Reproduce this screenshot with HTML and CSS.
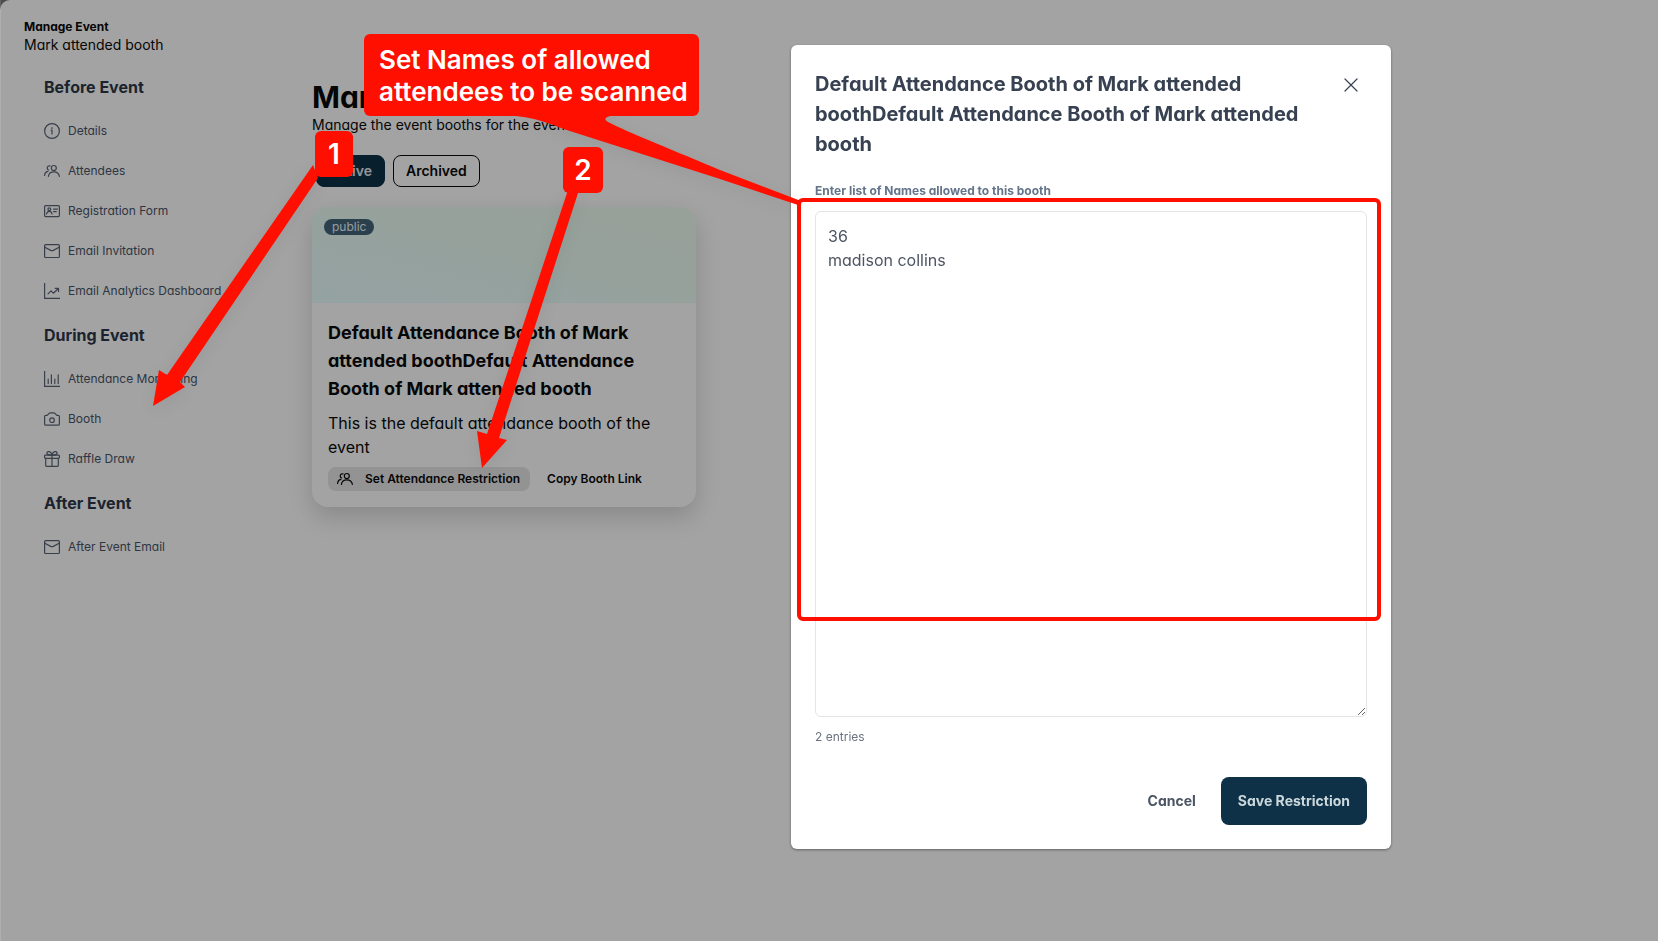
FILE: index.html
```html
<!DOCTYPE html>
<html lang="en">
<head>
<meta charset="utf-8">
<title>Manage Event</title>
<link rel="stylesheet" href="styles.css">
</head>
<body>
<svg class="defs" aria-hidden="true">
  <symbol id="i-info" viewBox="0 0 16 16"><circle cx="8" cy="8" r="7.4"/><path d="M8 7.2v3.8M7.2 7.2H8M8 4.6v.8"/></symbol>
  <symbol id="i-users" viewBox="0 0 16 16"><circle cx="9.8" cy="5" r="2.5"/><path d="M4.4 13.4c.4-3 2.5-4.6 5.400-4.600s5 1.600 5.600 4.600M6 2.900C4.400 2.500 3.200 3.500 3.200 4.900c0 1 .6 1.800 1.500 2.100M.6 12.500c.1-2.200 1.200-3.700 3.300-4.100"/></symbol>
  <symbol id="i-card" viewBox="0 0 16 16"><rect x=".6" y="2.600" width="14.800" height="11" rx="1"/><circle cx="5.300" cy="6.300" r="1.400"/><path d="M2.600 11c.3-1.700 1.300-2.600 2.700-2.600S7.700 9.300 8 11M9.600 6.200h3.800M9.600 8.700h2.600"/></symbol>
  <symbol id="i-mail" viewBox="0 0 16 16"><rect x=".6" y="1.700" width="14.800" height="12.800" rx="1"/><path d="M.8 4.300 6.700 7.400q1.300.6 2.600 0l5.900-3.100"/></symbol>
  <symbol id="i-trend" viewBox="0 0 16 16"><path d="M.6.300v15.100H16M4 10.800l3-3 2.400 2.400 5-4.700M11.300 5.400h3.200v3.200"/></symbol>
  <symbol id="i-bars" viewBox="0 0 16 16"><path d="M.6.300v15.100H16M4.200 12.600V8.200M7.400 12.600V3.800M10.800 12.600V8.200M14.200 12.600V3.800"/></symbol>
  <symbol id="i-camera" viewBox="0 0 16 16"><path d="M1.900 4.400h1.300l1.900-2q.5-.5 1.200-.5h3.400q.7 0 1.200.5l1.900 2h1.300q1.300 0 1.300 1.300v7.200q0 1.300-1.300 1.300H1.900Q.6 14.200.6 12.900V5.700q0-1.300 1.300-1.300z"/><circle cx="8" cy="9.200" r="2.300"/></symbol>
  <symbol id="i-gift" viewBox="0 0 16 16"><rect x=".6" y="4.100" width="14.800" height="3.300" rx=".8"/><path d="M1.700 7.400v7.200q0 .8.8.8h11q.8 0 .8-.8V7.400M8 4.100v11.300M8 4.100C4.500 4.300 2.600 3.400 3 1.700 3.500 0 7.100-.1 8 4.100zM8 4.100c3.500.2 5.400-.7 5-2.400C12.500 0 8.900-.1 8 4.100z"/></symbol>
  <symbol id="i-close" viewBox="0 0 16 16"><path d="m2 2 12 12M14 2 2 14"/></symbol>
</svg>

<div class="app">
  <aside class="sidebar">
    <p class="eyebrow">Manage Event</p>
    <p class="event-name">Mark attended booth</p>
    <nav class="nav">
      <h2 class="nav-title">Before Event</h2>
      <a class="nav-link" href="#"><svg class="icon"><use href="#i-info"/></svg>Details</a>
      <a class="nav-link" href="#"><svg class="icon"><use href="#i-users"/></svg>Attendees</a>
      <a class="nav-link" href="#"><svg class="icon"><use href="#i-card"/></svg>Registration Form</a>
      <a class="nav-link" href="#"><svg class="icon"><use href="#i-mail"/></svg>Email Invitation</a>
      <a class="nav-link" href="#"><svg class="icon"><use href="#i-trend"/></svg>Email Analytics Dashboard</a>
      <h2 class="nav-title">During Event</h2>
      <a class="nav-link" href="#"><svg class="icon"><use href="#i-bars"/></svg>Attendance Monitoring</a>
      <a class="nav-link" href="#"><svg class="icon"><use href="#i-camera"/></svg>Booth</a>
      <a class="nav-link" href="#"><svg class="icon"><use href="#i-gift"/></svg>Raffle Draw</a>
      <h2 class="nav-title">After Event</h2>
      <a class="nav-link" href="#"><svg class="icon"><use href="#i-mail"/></svg>After Event Email</a>
    </nav>
  </aside>

  <main class="main">
    <h1 class="page-title">Manage Booths</h1>
    <p class="page-sub">Manage the event booths for the event</p>
    <div class="tabs">
      <button class="tab tab-active" type="button">Active</button>
      <button class="tab" type="button">Archived</button>
    </div>
    <article class="card">
      <div class="card-cover"><span class="badge">public</span></div>
      <div class="card-body">
        <h3 class="card-title">Default Attendance Booth of Mark attended boothDefault Attendance Booth of Mark attended booth</h3>
        <p class="card-text">This is the default attendance booth of the event</p>
        <div class="card-actions">
          <button class="small-btn small-btn-filled" type="button"><svg class="icon"><use href="#i-users"/></svg>Set Attendance Restriction</button>
          <button class="small-btn" type="button">Copy Booth Link</button>
        </div>
      </div>
    </article>
  </main>
</div>

<div class="overlay">
  <form class="modal" role="dialog" aria-labelledby="modal-title">
    <header class="modal-head">
      <h2 class="modal-title" id="modal-title">Default Attendance Booth of Mark attended boothDefault Attendance Booth of Mark attended booth</h2>
      <button class="close" type="button" aria-label="Close"><svg class="icon"><use href="#i-close"/></svg></button>
    </header>
    <label class="field-label" for="names">Enter list of Names allowed to this booth</label>
    <textarea class="names" id="names" rows="20" spellcheck="false">36
madison collins</textarea>
    <p class="count">2 entries</p>
    <footer class="modal-foot">
      <button class="btn" type="button">Cancel</button>
      <button class="btn btn-primary" type="submit">Save Restriction</button>
    </footer>
  </form>
</div>

<div class="notes">
  <svg class="note-shapes" aria-hidden="true">
    <rect class="frame" x="799" y="200" width="580" height="419" rx="4"/>
    <g class="pointers">
      <polygon points="313,165 167,375 159,370 153,406 185,387 180,382 318,178"/>
      <polygon points="568,190 487,434 477,431 482,468 507,440 499,438 579,190"/>
      <path d="M500 115C540 116 552 126 573 132L720 179 798 205 801 201 720 170C680 153 625 131 608 122Q600 117 616 115z"/>
    </g>
  </svg>
  <p class="note callout">Set Names of allowed attendees to be scanned</p>
  <span class="note step step-one">1</span>
  <span class="note step step-two">2</span>
</div>
</body>
</html>
```
FILE: styles.css
```css
* { box-sizing: border-box; }

html { background: #777; }

body {
  margin: 0;
  font-family: Inter, "Liberation Sans", sans-serif;
  font-feature-settings: "cv11";
  color: #0a0a0a;
}

h1, h2, h3, p { margin: 0; }

button {
  font: inherit;
  font-feature-settings: inherit;
  color: inherit;
  background: none;
  border: 0;
  padding: 0;
}

.defs { display: none; }

.icon {
  width: 16px;
  height: 16px;
  flex: none;
  fill: none;
  stroke: currentColor;
  stroke-width: 1.2;
  stroke-linecap: round;
  stroke-linejoin: round;
}

.app {
  display: flex;
  min-height: 100vh;
  background: #fff;
  border-top-left-radius: 10px;
}

.sidebar {
  width: 312px;
  flex: none;
  padding: 19px 24px;
}

.eyebrow { font-size: 12px; line-height: 16px; font-weight: 700; }
.event-name { font-size: 14px; line-height: 20px; }

.nav { padding: 8px 20px; }

.nav-title {
  font-size: 16px;
  line-height: 48px;
  font-weight: 700;
  color: #2d3748;
}

.nav-link {
  display: flex;
  align-items: center;
  gap: 8px;
  height: 40px;
  font-size: 12px;
  line-height: 16px;
  color: #4a5568;
  text-decoration: none;
  white-space: nowrap;
}

.nav-link .icon { opacity: .9; }

.main { flex: 1; padding-top: 79px; }

.page-title { font-size: 30px; line-height: 36px; font-weight: 700; }
.page-sub { font-size: 14px; line-height: 20px; }

.tabs { display: flex; gap: 8px; margin: 20px 0; padding-left: 4px; }

.tab {
  padding: 5px 12px;
  border: 1px solid #0a0a0a;
  border-radius: 8px;
  font-size: 14px;
  line-height: 20px;
  font-weight: 600;
}

.tab-active { background: #0e3147; border-color: #0e3147; color: #e2e8f0; }

.card {
  width: 384px;
  border-radius: 16px;
  background: #fff;
  box-shadow: 0 10px 24px rgba(0, 0, 0, .16);
  overflow: hidden;
}

.card-cover {
  height: 96px;
  padding: 12px;
  display: flex;
  align-items: flex-start;
  background: linear-gradient(to top right, #e8fdfd, #eefcee);
}

.badge {
  padding: 0 8px;
  border-radius: 8px;
  background: #426477;
  color: #edf2f7;
  font-size: 12px;
  line-height: 16px;
  font-feature-settings: normal;
}

.card-body { padding: 16px; }
.card-title { font-size: 18px; line-height: 28px; font-weight: 700; }
.card-text { font-size: 16px; line-height: 24px; margin: 8px 0; }
.card-actions { display: flex; gap: 8px; }

.small-btn {
  display: flex;
  align-items: center;
  gap: 12px;
  padding: 4px 10px 4px 9px;
  border-radius: 8px;
  font-size: 12px;
  line-height: 16px;
  font-weight: 600;
}

.small-btn-filled { background: #e6e6e6; }

.overlay {
  position: fixed;
  inset: 0;
  display: grid;
  grid-template-columns: 791fr 600px 267fr;
  align-items: start;
  padding-top: 45px;
  background: rgba(0, 0, 0, .36);
  box-shadow: inset 1px 0 rgba(255, 255, 255, .12);
}

.modal {
  grid-column: 2;
  display: flex;
  flex-direction: column;
  padding: 24px;
  border-radius: 6px;
  background: #fff;
  box-shadow: 0 1px 3px rgba(0, 0, 0, .4);
}

.modal-head {
  display: flex;
  justify-content: space-between;
  align-items: flex-start;
  gap: 24px;
}

.modal-title { font-size: 20px; line-height: 30px; font-weight: 700; color: #374151; }

.close {
  display: grid;
  place-items: center;
  width: 32px;
  height: 32px;
  flex: none;
  color: #374151;
}

.field-label {
  margin: 24px 0 12px;
  font-size: 12px;
  line-height: 16px;
  font-weight: 700;
  color: #64748b;
}

.names {
  width: 100%;
  padding: 12px;
  border: 1px solid #e5e5e5;
  border-radius: 6px;
  background: #fff;
  color: #4b5563;
  font: inherit;
  font-feature-settings: inherit;
  font-size: 16px;
  line-height: 24px;
  resize: both;
  outline: 0;
}

.count {
  margin-top: 12px;
  font-size: 12px;
  line-height: 16px;
  color: #6b7280;
}

.modal-foot {
  display: flex;
  justify-content: flex-end;
  gap: 8px;
  margin-top: 32px;
}

.btn {
  padding: 14px 17px;
  border-radius: 8px;
  font-size: 14px;
  line-height: 20px;
  font-weight: 700;
  color: #4b5563;
}

.btn-primary { background: #0e3147; color: #cbd8dc; }

.notes { position: absolute; inset: 0; pointer-events: none; overflow: hidden; }

.note-shapes {
  position: absolute;
  width: 100%;
  height: 100%;
  fill: #ff0f00;
}

.pointers { filter: drop-shadow(0 4px 8px rgba(0, 0, 0, .06)); }

.frame { fill: none; stroke: #ff0f00; stroke-width: 4; }

.note {
  position: absolute;
  background: #ff0f00;
  color: #fff;
  font-weight: 600;
  font-feature-settings: normal;
  border-radius: 6px;
}

.callout {
  left: 364px;
  top: 34px;
  width: 335px;
  padding: 10px 8px 8px 15px;
  font-size: 26px;
  line-height: 32px;
}

.step {
  width: 38px;
  text-align: center;
  font-size: 28px;
  line-height: 46px;
}

.step-one { left: 315px; top: 131px; }
.step-two { left: 563px; top: 147px; width: 40px; }
```
